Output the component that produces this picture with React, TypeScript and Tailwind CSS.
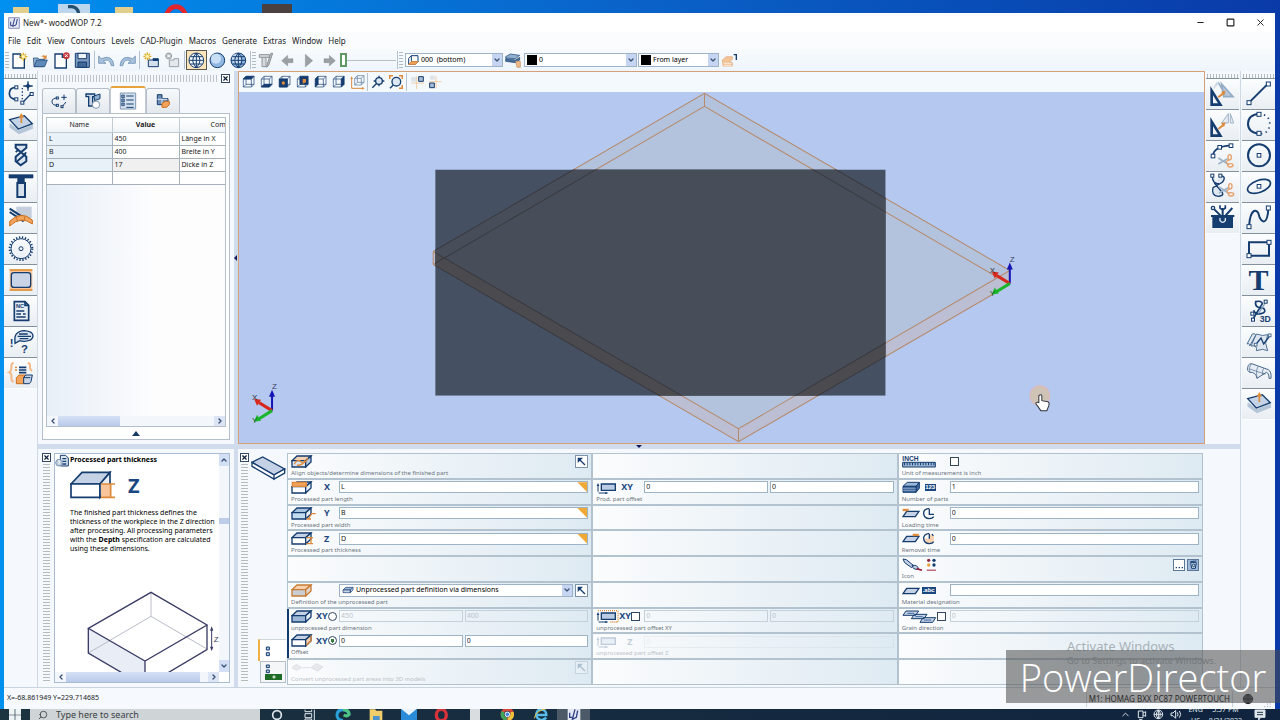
import type { ReactNode } from "react";
import { ChevronDown, ChevronLeft, ChevronRight, ChevronUp, Minus, Search, Square, X } from "lucide-react";
import clsx from "clsx";

const NAVY = "#153d6f";
const ORANGE = "#dd8a3a";

type IconProps = { w: number; h: number; children: ReactNode; sw?: number; color?: string };

// Every icon is drawn on a grid three times finer than its size on screen
function Icon({ w, h, children, sw = 4, color = NAVY }: IconProps) {
  return (
    <svg
      width={w}
      height={h}
      viewBox={`0 0 ${w * 3} ${h * 3}`}
      fill="none"
      stroke={color}
      strokeWidth={sw}
      className="shrink-0"
      aria-hidden="true"
    >
      {children}
    </svg>
  );
}

function Node({ x, y, s = 9 }: { x: number; y: number; s?: number }) {
  return <rect x={x - s / 2} y={y - s / 2} width={s} height={s} fill="#fff" strokeWidth={3} />;
}

function Scissors({ x, y }: { x: number; y: number }) {
  return (
    <g transform={`translate(${x} ${y})`}>
      <path d="M2 4 30 22M2 22 30 6" stroke="#9db3c9" strokeWidth={5} />
      <ellipse cx="36" cy="2" rx="5" ry="8" stroke="#e9a06a" />
      <ellipse cx="38" cy="26" rx="8" ry="5" stroke="#e9a06a" />
      <path d="m24 16 10-6M26 18l8 6" stroke="#e9a06a" />
    </g>
  );
}

function Plate() {
  return (
    <Icon w={28} h={28}>
      <path d="M8 46 36 66 78 50M8 40 36 60 78 44" stroke="#b4c6d8" strokeWidth={6} />
      <path d="M8 26 52 14 76 38 34 54Z" fill="#c4d4e6" />
      <path d="M43 36V14" stroke={ORANGE} strokeWidth={5} />
      <path d="m35 20 8-14 8 14Z" fill={ORANGE} stroke="none" />
    </Icon>
  );
}

const leftTools: { name: string; icon: ReactNode }[] = [
  {
    name: "Contour",
    icon: (
      <Icon w={28} h={28}>
        <path d="M28 22Q7 22 7 40T28 58" strokeWidth={5} />
        <path d="M46 24v34" strokeDasharray="4 6" />
        <path d="M63 4v28M49 18h28M46 68l28-28" />
        <path d="m63 10 8 8-8 8-8-8Z" fill={NAVY} stroke="none" />
        <Node x={28} y={22} />
        <Node x={28} y={58} />
        <Node x={46} y={68} />
        <Node x={74} y={42} />
      </Icon>
    ),
  },
  { name: "Workpiece", icon: <Plate /> },
  {
    name: "Drilling",
    icon: (
      <Icon w={28} h={28}>
        <path d="M26 8h32v9L26 44v14l15 12 17-12V44L26 17Z" fill="#dbe5ef" strokeWidth={6} />
        <path d="M26 30l8-6M50 38l8-7M28 60l28-24" strokeWidth={5} />
      </Icon>
    ),
  },
  {
    name: "Routing",
    icon: (
      <Icon w={28} h={28}>
        <path d="M6 5h72v10H52v12H32V15H6Z" fill={NAVY} strokeWidth={2} />
        <path d="M31 30h23v42H31Z" fill="#d5e0ec" strokeWidth={6} />
      </Icon>
    ),
  },
  {
    name: "Edge",
    icon: (
      <Icon w={28} h={28}>
        <path d="M28 8h46v34H28Z" fill="#c5cedd" stroke="none" />
        <path d="m8 14 50 32M8 24l42 28" strokeWidth={6} />
        <path d="M8 52q34-34 68-4v12Q42 34 8 66Z" fill="#f2a45c" stroke="#c96f20" strokeWidth={3} />
        <path d="m28 38 4 14M54 38l-3 12" stroke="#c96f20" strokeWidth={3} />
      </Icon>
    ),
  },
  {
    name: "Sawing",
    icon: (
      <Icon w={28} h={28}>
        <circle cx="42" cy="41" r="34" strokeWidth={6} strokeDasharray="4 5" />
        <circle cx="42" cy="41" r="30" strokeWidth={3} />
        <circle cx="42" cy="41" r="6" strokeWidth={3} />
      </Icon>
    ),
  },
  {
    name: "Pocket",
    icon: (
      <Icon w={28} h={28}>
        <path d="M8 10h68v64H8Z" fill="#f9c69a" stroke="none" />
        <path d="M8 12h68M8 72h68" stroke="#e08a2e" strokeWidth={5} />
        <rect x="13" y="20" width="58" height="44" rx="8" fill="#c9d5e6" />
      </Icon>
    ),
  },
  {
    name: "NC code",
    icon: (
      <Icon w={28} h={28} sw={5}>
        <path d="M22 14h32l11 11v45H22Z" fill="#e8eef5" />
        <path d="M54 14v11h11M28 42h24M28 51h14M28 60h28M48 51h8" />
        <text x="27" y="34" fontSize="17" fontWeight="700" fill={NAVY} stroke="none" fontFamily="Liberation Sans, sans-serif">NC</text>
      </Icon>
    ),
  },
  {
    name: "Comment",
    icon: (
      <Icon w={28} h={28}>
        <path d="M24 40q-4-30 28-32 26 2 26 16T52 40q-8 0-14-2l-14 8Z" fill="#dbe7f2" strokeWidth={4} />
        <path d="M36 18h26M32 25h40M38 32h26" />
        <text x="8" y="58" fontSize="34" fontWeight="700" fill={NAVY} stroke="none" fontFamily="Liberation Sans, sans-serif">!</text>
        <text x="42" y="75" fontSize="34" fontWeight="700" fill={NAVY} stroke="none" fontFamily="Liberation Sans, sans-serif">?</text>
      </Icon>
    ),
  },
  {
    name: "Component",
    icon: (
      <Icon w={28} h={28}>
        <path d="M20 12q-8 0-7 12t-6 16q7 2 6 14t7 14M62 12q8 0 7 10t6 14" stroke="#f3b98b" strokeWidth={6} />
        <path d="M36 25h22M36 33h22M36 41h22" strokeWidth={5} />
        <path d="M24 25h6M24 33h6" stroke={ORANGE} />
        <path d="m28 56 8-8h20l-5 8v18H28Z" fill="#f2a45c" stroke="#c96f20" strokeWidth={3} />
        <path d="m50 56 6-8h20l-4 20-5 6H50ZM50 56h20" fill="#c9d5e6" strokeWidth={3} />
      </Icon>
    ),
  },
];

const editTools: { name: string; icon: ReactNode }[] = [
  {
    name: "Move",
    icon: (
      <Icon w={28} h={28}>
        <path d="M38 12 72 50H44ZM28 8l20 34" fill="#b9c8d8" stroke="#93abc4" strokeWidth={5} />
        <path d="M20 18 30 4M14 26 24 8" stroke="#cbd7e3" />
        <path d="M8 32v42h26Z" strokeWidth={8} />
        <path d="m28 52 16-13" stroke={ORANGE} strokeWidth={6} />
        <path d="m50 32-14 3 9 11Z" fill={ORANGE} stroke="none" />
      </Icon>
    ),
  },
  {
    name: "Mirror",
    icon: (
      <Icon w={28} h={28}>
        <path d="M58 8v28H38ZM64 8v28h10Z" fill="#e4ebf3" stroke="#9fb4c9" strokeWidth={3} />
        <path d="M8 32v42h26Z" strokeWidth={8} />
        <path d="m28 54 16-13" stroke={ORANGE} strokeWidth={6} />
        <path d="m50 34-14 3 9 11Z" fill={ORANGE} stroke="none" />
      </Icon>
    ),
  },
  {
    name: "Trim",
    icon: (
      <Icon w={28} h={28}>
        <path d="M12 42Q12 14 66 10" strokeWidth={5} />
        <Node x={12} y={42} s={11} />
        <Node x={32} y={16} s={11} />
        <Node x={66} y={11} s={11} />
        <Scissors x={26} y={44} />
      </Icon>
    ),
  },
  {
    name: "Split",
    icon: (
      <Icon w={28} h={28}>
        <path d="M10 8q0 26 20 24M34 8q20 2 6 20L12 44q-6 24 16 26 22-2 8-16L16 30" strokeWidth={4} fill="#d4e0ec" fillOpacity={0.6} />
        <Node x={10} y={8} />
        <Node x={34} y={8} />
        <Scissors x={28} y={38} />
      </Icon>
    ),
  },
  {
    name: "Toolbox",
    icon: (
      <Icon w={28} h={28}>
        <path d="M10 38h62v34H10Z" fill={NAVY} stroke="none" />
        <path d="M6 36h70M16 16l18 18M41 12v22M70 12 50 34" strokeWidth={6} />
        <path d="M33 4v8l8 6 8-6V4" strokeWidth={5} />
        <circle cx="12" cy="12" r="5" />
        <path d="M33 42v8q8 10 16 0v-8" stroke="#dfe8f2" strokeWidth={4} />
      </Icon>
    ),
  },
];

const drawTools: { name: string; icon: ReactNode }[] = [
  {
    name: "Line",
    icon: (
      <Icon w={28} h={28} sw={6}>
        <path d="M12 68 70 10" />
        <Node x={12} y={68} s={12} />
        <Node x={70} y={12} s={12} />
      </Icon>
    ),
  },
  {
    name: "Arc",
    icon: (
      <Icon w={28} h={28} sw={6}>
        <path d="M42 8Q9 12 9 38T42 68" />
        <path d="M42 8q34 4 32 32T46 68" strokeDasharray="4 11" strokeWidth={5} />
        <Node x={42} y={10} s={12} />
        <Node x={42} y={67} s={12} />
      </Icon>
    ),
  },
  {
    name: "Circle",
    icon: (
      <Icon w={28} h={28} sw={6}>
        <circle cx="42" cy="40" r="33" />
        <Node x={42} y={40} s={11} />
      </Icon>
    ),
  },
  {
    name: "Ellipse",
    icon: (
      <Icon w={28} h={28} sw={5}>
        <ellipse cx="42" cy="40" rx="36" ry="18" transform="rotate(-20 42 40)" />
        <Node x={42} y={40} s={11} />
      </Icon>
    ),
  },
  {
    name: "Spline",
    icon: (
      <Icon w={28} h={28} sw={6}>
        <path d="M12 68C16 8 38 14 42 34S68 70 70 12" />
        <Node x={12} y={68} s={12} />
        <Node x={70} y={12} s={12} />
      </Icon>
    ),
  },
  {
    name: "Rectangle",
    icon: (
      <Icon w={28} h={28} sw={6}>
        <path d="M12 22h60v40H12Z" />
        <Node x={12} y={62} s={12} />
        <Node x={72} y={22} s={12} />
      </Icon>
    ),
  },
  {
    name: "Text",
    icon: <span className="font-['Liberation_Serif',serif] text-[30px] leading-[30px] font-bold text-[#153d6f]">T</span>,
  },
  {
    name: "3D curve",
    icon: (
      <Icon w={28} h={28}>
        <path d="M24 66 52 20Q50 10 32 14q-4 20 24 20 10 12-8 16T26 40" strokeWidth={5} />
        <path d="M62 16 40 50" stroke="#8ea7c2" />
        <Node x={22} y={50} />
        <Node x={24} y={68} />
        <Node x={62} y={14} />
        <text x="44" y="76" fontSize="26" fontWeight="700" fill={NAVY} stroke="none" fontFamily="Liberation Sans, sans-serif">3D</text>
      </Icon>
    ),
  },
  {
    name: "Surface curve",
    icon: (
      <Icon w={28} h={28} sw={3} color="#4f7095">
        <path d="M22 18 6 48q8-4 8 6L32 22q-2-8-10-4ZM34 18l-16 36q20-4 16 14 20-8 34 0l-6-22 6-26q-14 6-34-2Z" fill="#dde6ef" />
        <path d="m32 50 16-20 8 18 18-24" stroke={NAVY} strokeWidth={4} />
        <Node x={32} y={50} s={8} />
        <Node x={74} y={22} s={8} />
      </Icon>
    ),
  },
  {
    name: "Surface",
    icon: (
      <Icon w={28} h={28} sw={3} color="#4a678a">
        <path d="M8 34q-2-20 12-20l50 18q10 6 8 26h-6q0-16-8-18L36 58Q32 38 14 40Z" fill="#e6edf4" />
        <path d="M20 14q-8 6-6 26M40 22q-8 8-4 36M56 28q-6 6-2 20M14 30l48 16" strokeWidth={2} />
      </Icon>
    ),
  },
  { name: "Working plane", icon: <Plate /> },
];

function ToolButton({ name, children }: { name: string; children: ReactNode }) {
  return (
    <button
      aria-label={name}
      className="h-[31px] w-full shrink-0 flex items-center justify-center border-b border-[#84909c] last:border-transparent bg-gradient-to-b from-[#fbfdfe] to-[#e9eef3]"
    >
      {children}
    </button>
  );
}

function ToolStrip({ tools }: { tools: { name: string; icon: ReactNode }[] }) {
  return (
    <div className="w-[33px] shrink-0 flex flex-col pt-[3px]">
      <div className="h-1 mx-px bg-[repeating-linear-gradient(90deg,#b4bbc1_0_1px,transparent_1px_3px)]" />
      <div className="border-t border-[#84909c] flex flex-col">
        {tools.map((tool) => (
          <ToolButton name={tool.name} key={tool.name}>
            {tool.icon}
          </ToolButton>
        ))}
      </div>
    </div>
  );
}

function CloseBox() {
  return (
    <button aria-label="Close panel" className="size-[9px] shrink-0 border border-[#33475f] bg-white flex items-center justify-center">
      <X size={7} strokeWidth={4} color="#0e1f38" />
    </button>
  );
}

function Sep() {
  return <div className="h-[18px] w-px shrink-0 mx-px bg-[#b6c2cf]" />;
}

function Grip() {
  return <div className="h-[16px] w-1 shrink-0 bg-[repeating-linear-gradient(180deg,#b4bbc1_0_1px,transparent_1px_3px)]" />;
}

function BarButton({ name, children, active }: { name: string; children: ReactNode; active?: boolean }) {
  return (
    <button
      aria-label={name}
      className={clsx(
        "w-[21px] h-[20px] shrink-0 flex items-center justify-center",
        active && "border border-[#5c584e] bg-[#fbe3ba]"
      )}
    >
      {children}
    </button>
  );
}

function Doc({ children }: { children?: ReactNode }) {
  return (
    <Icon w={17} h={17}>
      <path d="M6 6h22v10h12v32H6Z" fill="#fff" />
      {children}
    </Icon>
  );
}

function Star({ x, y }: { x: number; y: number }) {
  return (
    <g transform={`translate(${x} ${y})`} stroke="#e0b12c" strokeWidth={4}>
      <path d="M0-12V12M-12 0H12M-8-8 8 8M8-8-8 8" />
      <circle r="5" fill="#fff6c0" stroke="none" />
    </g>
  );
}

function Globe({ lines, white }: { lines?: boolean; white?: boolean }) {
  return (
    <Icon w={17} h={17} sw={3}>
      <circle cx="25" cy="25" r="22" fill={white ? "#f4f8fc" : "#8fb6e0"} />
      {!white && <circle cx="21" cy="20" r="15" fill="#c8def4" stroke="none" />}
      {lines && <path d="M25 3v44M3 25h44M25 3q-22 22 0 44M25 3q22 22 0 44M7 14h36M7 36h36" />}
    </Icon>
  );
}

function MainToolbar() {
  return (
    <div className="h-[22px] shrink-0 flex items-center pl-px bg-gradient-to-b from-[#f8fbfe] to-[#eef5fb]">
      <Grip />
      <BarButton name="New">
        <Doc>
          <Star x={37} y={14} />
        </Doc>
      </BarButton>
      <BarButton name="Open">
        <Icon w={17} h={17} sw={2}>
          <path d="M4 18h14l4 4h16v8L34 44H6Z" fill="#8fb0d0" />
          <path d="m6 44 8-20h32l-8 20Z" fill="#5f8ab8" />
          <path d="M26 14q8-8 14-2l4-4v12H32l4-4q-4-3-10-2Z" fill={ORANGE} stroke="none" />
        </Icon>
      </BarButton>
      <BarButton name="Close">
        <Doc>
          <circle cx="40" cy="11" r="10" fill="#c43b3f" stroke="none" />
          <path d="m36 7 8 8m0-8-8 8" stroke="#fff" strokeWidth={3} />
        </Doc>
      </BarButton>
      <BarButton name="Save">
        <Icon w={17} h={17} sw={3}>
          <path d="M4 4h42v42H4Z" fill="#7c9bbf" />
          <path d="M12 4h26v16H12Z" fill="#eef3f8" />
          <path d="M12 30h26v16H12Z" fill="#3f6898" />
        </Icon>
      </BarButton>
      <Sep />
      <BarButton name="Undo">
        <Icon w={17} h={17} sw={2} color="#5a7fa8">
          <path d="M2 12v22h22l-8-7q18-10 24 14h8Q44 6 10 20Z" fill="#a9c2dc" />
        </Icon>
      </BarButton>
      <BarButton name="Redo">
        <Icon w={17} h={17} sw={2} color="#5a7fa8">
          <path d="M49 12v22H27l8-7q-18-10-24 14H3Q7 6 41 20Z" fill="#a9c2dc" />
        </Icon>
      </BarButton>
      <Sep />
      <BarButton name="New layer">
        <Icon w={17} h={17} sw={3}>
          <path d="M16 24h14v-4h16v24H16Z" fill="#d4e0ec" />
          <path d="M30 24h16" strokeWidth={6} />
          <Star x={13} y={13} />
        </Icon>
      </BarButton>
      <BarButton name="Delete layer">
        <Icon w={17} h={17} sw={3} color="#97a0a9">
          <path d="M16 24h14v-4h14v24H16Z" fill="#e4e8ec" />
          <circle cx="14" cy="12" r="9" fill="#b9bfc5" />
          <path d="m10 8 8 8m0-8-8 8" stroke="#fff" />
        </Icon>
      </BarButton>
      <Sep />
      <BarButton name="Wireframe" active>
        <Globe lines white />
      </BarButton>
      <BarButton name="Solid">
        <Globe />
      </BarButton>
      <BarButton name="Solid with edges">
        <Globe lines />
      </BarButton>
      <Sep />
      <Grip />
      <BarButton name="Simulate">
        <Icon w={17} h={17} sw={3} color="#8e9499">
          <path d="M4 8h30v8H4ZM12 16v28h12V16" fill="#d7dadd" />
          <path d="m44 4-12 36-6 6 2-10L38 4Z" fill="#b5babe" />
        </Icon>
      </BarButton>
      <BarButton name="Step back">
        <Icon w={13} h={13} sw={1} color="#777d82">
          <path d="M2 20 20 4v10h16v12H20v10Z" fill="#9ba0a4" />
        </Icon>
      </BarButton>
      <BarButton name="Play">
        <Icon w={13} h={15} sw={1} color="#777d82">
          <path d="m10 4 22 19-22 19Z" fill="#9ba0a4" />
        </Icon>
      </BarButton>
      <BarButton name="Step forward">
        <Icon w={13} h={13} sw={1} color="#777d82">
          <path d="M37 20 19 4v10H3v12h16v10Z" fill="#9ba0a4" />
        </Icon>
      </BarButton>
      <input
        type="range"
        aria-label="Speed"
        defaultValue={0}
        className="w-[56px] h-[16px] shrink-0 appearance-none bg-[linear-gradient(#b9bfc5,#b9bfc5)] bg-[length:100%_1px] bg-center bg-no-repeat [&::-webkit-slider-thumb]:appearance-none [&::-webkit-slider-thumb]:w-[7px] [&::-webkit-slider-thumb]:h-[14px] [&::-webkit-slider-thumb]:border-2 [&::-webkit-slider-thumb]:border-[#5f9a63] [&::-webkit-slider-thumb]:bg-white"
      />
      <Sep />
      <Grip />
      <Combo label="Plane" options={["000\u00a0 (bottom)"]} className="w-[98px] h-[14px] ml-[2px]">
        <Icon w={11} h={10} sw={3}>
          <path d="M10 2h20v18l-8 8H2V10ZM10 2v18h20" />
          <path d="m2 28 8-8h20l-8 8Z" fill="#f2a45c" stroke={ORANGE} />
        </Icon>
      </Combo>
      <BarButton name="Layers">
        <Icon w={17} h={17} sw={2}>
          <path d="m2 14 14-8 28 4-12 10-30-2Z" fill="#8fb0d0" />
          <path d="m2 20 30 4 12-8v8l-12 8-30-4Z" fill="#4a6f9b" />
          <path d="M32 28h14v18H36Z" fill="#f0b98a" stroke="#c98c5a" />
        </Icon>
      </BarButton>
      <Combo label="Layer" options={["0"]} className="w-[113px] h-[14px]">
        <span className="size-[10px] bg-black" />
      </Combo>
      <Combo label="Colour" options={["From layer"]} className="w-[81px] h-[14px] ml-px">
        <span className="size-[10px] bg-black" />
      </Combo>
      <BarButton name="Apply">
        <Icon w={17} h={17} sw={2}>
          <path d="m4 24 12-10h18v8l-8 8 8 2v10H6Z" fill="#f3c49a" stroke="#dca575" />
          <path d="M38 8h8v16" strokeWidth={4} color="#5d6c7c" />
          <path d="M8 34h24M8 40h24" stroke="#fff" />
        </Icon>
      </BarButton>
    </div>
  );
}

type ComboProps = { label: string; id?: string; options: string[]; className: string; children: ReactNode };

function Combo({ label, id, options, className, children }: ComboProps) {
  return (
    <div className={clsx("shrink-0 flex items-center gap-[2px] pl-[2px] border border-[#9fb3c8] bg-white", className)}>
      {children}
      <select
        id={id}
        aria-label={label}
        className="flex-1 min-w-0 h-full appearance-none bg-transparent font-['Noto_Sans',sans-serif] text-[7px] leading-[10px] text-black"
      >
        {options.map((option) => (
          <option key={option}>{option}</option>
        ))}
      </select>
      <span className="w-[10px] h-full flex items-center justify-center bg-[#c6d6f2] pointer-events-none">
        <ChevronDown size={8} strokeWidth={4} color="#3e5578" />
      </span>
    </div>
  );
}

// Cube faces in the order of the view buttons: top, bottom, front, back, left, right
const cubeFaces = [
  "M4 12 12 4h24l-8 8Z",
  "m4 36 8-8h24l-8 8Z",
  "M4 12h24v24H4Z",
  "M12 4h24v24H12Z",
  "m4 12 8-8v24l-8 8Z",
  "m28 12 8-8v24l-8 8Z",
];
const cubeNames = ["Top", "Bottom", "Front", "Back", "Left", "Right"];

function ViewButton({ name, children }: { name: string; children: ReactNode }) {
  return (
    <button aria-label={name} className="w-[18px] h-full shrink-0 flex items-center justify-center">
      {children}
    </button>
  );
}

function ViewToolbar() {
  return (
    <div className="h-[20px] shrink-0 flex items-center pl-px bg-[#f4f9fd]">
      {cubeFaces.map((face, index) => (
        <ViewButton name={cubeNames[index]} key={face}>
          <Icon w={14} h={14} sw={2}>
            <path d={face} fill={NAVY} />
            <path d="M4 12h24v24H4ZM12 4h24v24H12ZM4 12l8-8M28 12l8-8M28 36l8-8M4 36l8-8" />
            {index === 2 && <circle cx="16" cy="24" r="5" fill={ORANGE} stroke="none" />}
            {index === 3 && <path d="M20 12h10v10l-10 4Z" fill={ORANGE} stroke="none" />}
          </Icon>
        </ViewButton>
      ))}
      <ViewButton name="Isometric">
        <Icon w={15} h={15} sw={2} color="#57779c">
          <path d="M14 10h20v20H14ZM22 2h20v20H22ZM14 10l8-8M34 10l8-8M34 30l8-8M14 30l8-8" />
          <path d="M5 10v30h34" stroke={ORANGE} strokeWidth={3} />
          <path d="m5 4-4 8h8ZM44 40l-8-4v8Z" fill={ORANGE} stroke="none" />
        </Icon>
      </ViewButton>
      <Sep />
      <ViewButton name="Zoom">
        <Icon w={14} h={14}>
          <circle cx="24" cy="18" r="10" fill="#dce8f4" />
          <path d="M24 2v6M24 28v6M8 18h6M34 18h6M16 26 4 38" />
        </Icon>
      </ViewButton>
      <ViewButton name="Zoom all">
        <Icon w={14} h={14}>
          <path d="M2 12V2h10M30 2h10v10M40 30v10H30" stroke={ORANGE} strokeWidth={5} />
          <circle cx="22" cy="20" r="13" fill="#dce8f4" />
          <path d="M13 30 3 40" />
        </Icon>
      </ViewButton>
      <Sep />
      <ViewButton name="Snap right">
        <Icon w={15} h={14} sw={3}>
          <path d="M4 6h14v14H4Z" fill="#dde3e9" stroke="none" />
          <path d="M20 4v38M4 24h38" stroke="#efcfa8" />
          <path d="M26 5h14v14H26Z" fill="#a9bed6" />
        </Icon>
      </ViewButton>
      <ViewButton name="Snap left">
        <Icon w={14} h={14} sw={3}>
          <path d="M6 2h14v12H6Z" fill="#dde3e9" stroke="none" />
          <path d="M24 4v36M4 20h36" stroke="#efcfa8" />
          <path d="M5 24h14v14H5Z" fill="#a9bed6" />
        </Icon>
      </ViewButton>
    </div>
  );
}

function Axes({ x, y }: { x: number; y: number }) {
  return (
    <g transform={`translate(${x} ${y})`} fontFamily="Liberation Sans, sans-serif" fontSize="8">
      <path d="M0 0v-16" stroke="#1414b4" strokeWidth={2} />
      <path d="m-3-14 3-7 3 7Z" fill="#1414b4" />
      <path d="m0 0-13-8" stroke="#d6281c" strokeWidth={3} />
      <path d="m-18-12 7 1-4 6Z" fill="#d6281c" />
      <path d="m0 0-13 8" stroke="#19b52a" strokeWidth={3} />
      <path d="m-18 11 7-1-4-6Z" fill="#19b52a" />
      <text x="0" y="-22" fill="#3c3f66">Z</text>
      <text x="-20" y="-11" fill="#333">X</text>
      <text x="-20" y="12" fill="#1d5a26">Y</text>
    </g>
  );
}

// Edges of the workpiece in the isometric view
const wires =
  "M434 252 705 94l305 177M434 265l271-158 305 178M705 94v13M434 252v13M434 252l305 177 271-158M434 265l305 177 271-157M739 429v13";

function Scene() {
  return (
    <svg viewBox="240 92 964 352" preserveAspectRatio="xMidYMid slice" className="block w-full h-full" role="img" aria-label="3D view">
      <clipPath id="plate">
        <path d="M436 170h450v226H436Z" />
      </clipPath>
      <rect x="0" y="0" width="1400" height="720" fill="#b5c8ef" />
      <path d="m705 94 305 177-271 158L434 252Z" fill="#b4c3dd" />
      <path d="m434 252 305 177 271-158v14L739 442 434 265Z" fill="#bcbfd3" />
      <path d={wires} fill="none" stroke="#b58a6c" strokeWidth={1} />
      <g clipPath="url(#plate)">
        <path d="M436 170h450v226H436Z" fill="#455062" />
        <path d="m705 94 305 177-271 158L434 252Z" fill="#484e59" />
        <path d="m434 252 305 177 271-158v14L739 442 434 265Z" fill="#4a4a4f" />
        <path d={wires} fill="none" stroke="#3a3a40" strokeWidth={1} />
      </g>
      <Axes x={1010} y={284} />
      <Axes x={273} y={411} />
      <circle cx="1040" cy="396" r="10" fill="#cfc3b6" stroke="#dbb7c2" />
      <path
        d="M1039 396q2-2 3 0v5l6 1q2 1 1 4l-2 5h-6l-5-7q0-2 3-1Z"
        fill="#fff"
        stroke="#30343c"
        strokeWidth={1}
      />
    </svg>
  );
}

const variables = [
  { name: "L", value: "450", comment: "Länge in X" },
  { name: "B", value: "400", comment: "Breite in Y" },
  { name: "D", value: "17", comment: "Dicke in Z" },
  { name: "", value: "", comment: "" },
];

function HScroll({ thumb }: { thumb: string }) {
  return (
    <div className="h-[10px] shrink-0 flex items-center bg-[#f3f7fb]">
      <button aria-label="Scroll left" className="w-[11px] h-full flex items-center justify-center">
        <ChevronLeft size={8} strokeWidth={4} color="#3a4f77" />
      </button>
      <div className="flex-1 h-full">
        <div className={clsx("h-full bg-gradient-to-b from-[#d5e0f5] to-[#b9caea]", thumb)} />
      </div>
      <button aria-label="Scroll right" className="w-[11px] h-full flex items-center justify-center bg-[#dce5f3]">
        <ChevronRight size={8} strokeWidth={4} color="#3a4f77" />
      </button>
    </div>
  );
}

function PanelTab({ name, active, children }: { name: string; active?: boolean; children: ReactNode }) {
  return (
    <button
      role="tab"
      aria-selected={active ? true : false}
      aria-label={name}
      className={clsx(
        "flex items-center justify-center border-x border-t rounded-t-[3px]",
        active
          ? "w-[36px] h-[27px] bg-white border-[#c3ccd5] border-t-2 border-t-[#e8a33c]"
          : "w-[34px] h-[25px] bg-gradient-to-b from-[#f7f9fb] to-[#e4e9ee] border-[#b6bfc8]"
      )}
    >
      {children}
    </button>
  );
}

function VariablesPanel() {
  return (
    <div className="w-[196px] shrink-0 flex flex-col px-[4px] pb-1">
      <div className="h-[15px] flex items-center gap-[2px]">
        <div className="flex-1 h-[7px] bg-[repeating-linear-gradient(90deg,#bcc3c9_0_1px,transparent_1px_3px)]" />
        <CloseBox />
      </div>
      <div role="tablist" className="h-[27px] flex items-end">
        <PanelTab name="Contours">
          <Icon w={18} h={18} sw={3}>
            <path d="M22 18Q6 18 6 29t16 11M36 44l12-14" />
            <path d="M42 8v16M34 16h16" />
            <Node x={22} y={18} s={6} />
            <Node x={22} y={40} s={6} />
            <Node x={36} y={44} s={6} />
          </Icon>
        </PanelTab>
        <PanelTab name="Processing">
          <Icon w={18} h={18} sw={3}>
            <path d="M6 6h26v8H26v28H14V14H6Z" fill="#c9d5e6" strokeWidth={4} />
            <path d="M30 12 48 6v14L32 26Z" fill="#8fb0d0" />
            <circle cx="36" cy="38" r="11" fill="#fff" stroke="#7b93ad" />
          </Icon>
        </PanelTab>
        <PanelTab name="Variables" active>
          <Icon w={18} h={18} sw={3}>
            <path d="M4 3h46v48H4Z" fill="#d5e2ee" stroke="#7d97b4" />
            <path d="M8 9h8v8H8ZM8 21h8v8H8ZM8 33h8v8H8Z" fill="#7d97b4" strokeWidth={2} />
            <path d="M22 12h22M22 24h22M22 36h22M22 46h22" />
          </Icon>
        </PanelTab>
        <PanelTab name="Components">
          <Icon w={14} h={18} sw={3}>
            <path d="M4 8h14v12h18v18H4Z" fill="#6d8db2" />
            <path d="M4 22h30M18 20v16" stroke="#dbe6f1" />
            <path d="m18 34 10-6h12v10l-8 8H18Z" fill="#f2a45c" stroke="#c96f20" />
          </Icon>
        </PanelTab>
      </div>
      <div className="flex-1 min-h-0 flex flex-col border border-[#b3bfca] bg-white p-[3px] pb-0">
        <div className="flex-1 min-h-0 flex flex-col border border-[#b3bfca] bg-gradient-to-r from-[#e7eff7] to-[#fdfdfe] to-60%">
          <div className="flex-1 overflow-hidden">
            <table className="w-[228px] table-fixed border-collapse font-['Noto_Sans',sans-serif] text-[7px] leading-[9px] text-[#222]">
              <thead className="bg-gradient-to-b from-white to-[#f1f4f7]">
                <tr className="h-[14px]">
                  <th className="w-[65px] font-normal border border-t-0 border-l-0 border-[#c2ccd5]">Name</th>
                  <th className="w-[67px] font-bold border border-t-0 border-[#c2ccd5]">Value</th>
                  <th className="font-normal border border-t-0 border-[#c2ccd5]">Comment</th>
                </tr>
              </thead>
              <tbody>
                {variables.map((row, index) => (
                  <tr className="h-[13px]" key={index}>
                    <td className={clsx("border border-l-0 border-[#a7b1bb] px-[2px]", row.name ? "bg-[#e8f0f8]" : "bg-white")}>
                      {row.name}
                    </td>
                    <td className={clsx("border border-[#a7b1bb] px-[2px]", row.name === "D" ? "bg-[#f0f0f0]" : "bg-white")}>
                      {row.value}
                    </td>
                    <td className="border border-[#a7b1bb] px-[2px] bg-white">{row.comment}</td>
                  </tr>
                ))}
              </tbody>
            </table>
          </div>
          <HScroll thumb="w-[62px]" />
        </div>
        <div className="h-[12px] shrink-0 flex items-center justify-center">
          <span className="border-x-4 border-x-transparent border-b-[5px] border-b-[#173a66]" />
        </div>
      </div>
    </div>
  );
}

function HelpPanel() {
  return (
    <div className="w-[196px] shrink-0 flex px-[4px] gap-[3px] pt-1 pb-1">
      <div className="flex flex-col items-center gap-[2px]">
        <CloseBox />
        <div className="flex-1 w-[7px] bg-[repeating-linear-gradient(180deg,#b4bbb9_0_1px,transparent_1px_3px)]" />
      </div>
      <div className="flex-1 min-w-0 flex flex-col border border-[#a9bdd2] bg-white">
        <div className="flex-1 min-h-0 flex">
          <div className="flex-1 min-w-0 overflow-hidden font-['Noto_Sans',sans-serif] text-black">
            <div className="flex items-center h-[13px]">
              <Icon w={15} h={14} sw={3}>
                <path d="M16 4h16l8 8v24H16Z" fill="#dbe6f1" />
                <path d="M22 14h12M22 22h12M22 30h12" strokeWidth={4} />
                <circle cx="12" cy="26" r="10" fill="#b9c9da" stroke="#7d97b4" />
                <path d="M9 22q4-5 6 0l-3 5v4" stroke="#fff" />
              </Icon>
              <h2 className="text-[7px] font-bold whitespace-nowrap">Processed part thickness</h2>
            </div>
            <div className="pl-[15px]">
              <div className="flex items-center gap-[12px] pt-[4px]">
                <Icon w={46} h={30} sw={5}>
                  <path d="M3 39 36 4h84L90 39Z" fill="#c5d2e6" />
                  <path d="M3 39h87v40H3Z" fill="#fff" />
                  <path d="M120 4v35L90 79V39Z" fill="#e8eef6" />
                  <path d="M93 39h28v40H93Z" fill="#f7c49c" stroke="none" />
                  <path d="M93 39h42M93 79h42M122 39v40" stroke={ORANGE} />
                </Icon>
                <span className="text-[20px] leading-none font-bold text-[#1b4781]">Z</span>
              </div>
              <p className="pt-[7px] text-[7px] leading-[9px] whitespace-nowrap">
                The finished part thickness defines the
                <br />
                thickness of the workpiece in the Z direction
                <br />
                after processing. All processing parameters
                <br />
                with the <b>Depth</b> specification are calculated
                <br />
                using these dimensions.
              </p>
              <div className="pt-[38px] pl-[17px]">
                <Icon w={136} h={90} sw={4} color="#3b3d66">
                  <path d="M4 112 174 210v80L4 186Z" fill="#e9edf5" stroke="none" />
                  <path d="M192 4v72L4 186M192 76l168 98" stroke="#b9bdc9" strokeWidth={3} />
                  <path d="M4 112 192 4l168 98-186 108ZM4 112v74l170 100M174 210v76M360 102v74L174 286" />
                  <path d="M374 110v66" strokeWidth={3} />
                  <path d="m374 106-5 13h10ZM374 180l-5-13h10Z" fill="#3b3d66" stroke="none" />
                  <text x="380" y="154" fontSize="24" fill="#3b3d66" stroke="none" fontFamily="Liberation Sans, sans-serif">Z</text>
                </Icon>
              </div>
            </div>
          </div>
          <div className="w-[10px] shrink-0 flex flex-col items-center bg-[#f3f7fb]">
            <button aria-label="Scroll up" className="h-[12px] w-full flex items-center justify-center bg-[#d3dff4]">
              <ChevronUp size={8} strokeWidth={4} color="#3a4f77" />
            </button>
            <span className="h-[6px] w-full mt-[52px] bg-[#bccce9]" />
            <button aria-label="Scroll down" className="mt-auto h-[12px] w-full flex items-center justify-center bg-[#d3dff4]">
              <ChevronDown size={8} strokeWidth={4} color="#3a4f77" />
            </button>
          </div>
        </div>
        <div className="pr-[10px]">
          <HScroll thumb="w-[134px]" />
        </div>
      </div>
    </div>
  );
}

type BoxProps = { top?: string; front?: string; side?: string; edge?: string; children?: ReactNode };

function PartBox({ top = "#c5d2e6", front = "#fff", side = "#e8eef6", edge = NAVY, children }: BoxProps) {
  return (
    <Icon w={25} h={13} sw={4} color={edge}>
      <path d="M3 17 18 3h42L44 17Z" fill={top} />
      <path d="M3 17h41v19H3Z" fill={front} />
      <path d="M60 3v18L44 36V17Z" fill={side} />
      {children}
    </Icon>
  );
}

function Sheet({ children }: { children?: ReactNode }) {
  return (
    <Icon w={18} h={11} sw={4}>
      <path d="M3 26 14 10h37L40 26Z" fill="#c5d2e6" />
      {children}
    </Icon>
  );
}

function OffsetIcon({ dashed }: { dashed?: boolean }) {
  return (
    <Icon w={23} h={13} sw={4}>
      <path d="M16 9h42v19H16Z" fill="#b9cce4" />
      <path d="M6 32V12M8 36h22" strokeWidth={3} />
      <path d="M6 6 2 15h8ZM37 36l-9-4v8Z" fill={NAVY} stroke="none" />
      {dashed && <path d="M6 2h60v34H40" stroke={ORANGE} strokeDasharray="3 3" />}
    </Icon>
  );
}

function Letter({ children }: { children: ReactNode }) {
  return <span className="font-['Noto_Sans',sans-serif] font-bold text-[9px] leading-[12px] text-[#1b4781]">{children}</span>;
}

type FieldProps = { label?: string; id?: string; icon?: ReactNode; children?: ReactNode; faded?: boolean; className?: string };

function Field({ label, id, icon, children, faded, className }: FieldProps) {
  return (
    <div className={clsx("min-w-0 min-h-0 overflow-hidden bg-gradient-to-r from-[#fbfcfd] to-[#deeaf2] px-[3px] pt-px", className)}>
      {label && (
        <>
          <div className={clsx("h-[13px] flex items-center", faded && "opacity-25")}>
            <div className="w-[48px] shrink-0 flex items-center gap-[2px]">{icon}</div>
            <div className="flex-1 min-w-0 flex items-center gap-[2px]">{children}</div>
          </div>
          <label
            htmlFor={id}
            className={clsx(
              "block font-['Noto_Sans',sans-serif] text-[6px] leading-[10px] whitespace-nowrap",
              faded ? "text-[#bcc3c9]" : "text-[#6c7680]"
            )}
          >
            {label}
          </label>
        </>
      )}
    </div>
  );
}

type TextBoxProps = { id?: string; name?: string; value: string; disabled?: boolean; linked?: boolean };

function TextBox({ id, name, value, disabled, linked }: TextBoxProps) {
  return (
    <div
      className={clsx(
        "flex-1 min-w-0 h-[12px] flex border",
        disabled ? "border-[#c5d1da] bg-transparent" : "border-[#9db3c6] bg-white"
      )}
    >
      <input
        id={id}
        aria-label={name}
        defaultValue={value}
        disabled={disabled}
        className={clsx(
          "flex-1 min-w-0 px-[1px] bg-transparent font-['Noto_Sans',sans-serif] text-[7px] leading-[10px]",
          disabled ? "text-[#bcc5cd]" : "text-[#222]"
        )}
      />
      {linked && <span className="size-[10px] bg-[#f0a935] [clip-path:polygon(0_0,100%_0,100%_100%)]" />}
    </div>
  );
}

function ArrowButton({ name }: { name: string }) {
  return (
    <button aria-label={name} className="size-[13px] shrink-0 border border-[#7e93a8] bg-white flex items-center justify-center">
      <Icon w={9} h={9} sw={4}>
        <path d="M6 6 24 24" />
        <path d="M2 2h16L2 18Z" fill={NAVY} stroke="none" />
      </Icon>
    </button>
  );
}

function Tick({ id, name }: { id?: string; name?: string }) {
  return <input type="checkbox" id={id} aria-label={name} className="size-[9px] shrink-0 appearance-none border border-[#33475f] bg-white" />;
}

function Radio({ name, checked }: { name: string; checked?: boolean }) {
  return (
    <input
      type="radio"
      name="unprocessed"
      aria-label={name}
      defaultChecked={checked}
      className="size-[9px] shrink-0 appearance-none rounded-full border border-[#33475f] bg-white checked:bg-[radial-gradient(#2f7d3c_0_2px,#fff_2px)]"
    />
  );
}

function PartForm() {
  return (
    <div className="flex-1 min-w-0 flex pt-1 pb-[2px] pr-[37px]">
      <div className="w-[13px] shrink-0 flex flex-col items-center gap-[2px] pb-[2px]">
        <CloseBox />
        <div className="flex-1 w-[7px] bg-[repeating-linear-gradient(180deg,#b4bbb9_0_1px,transparent_1px_3px)]" />
      </div>
      <div className="w-[35px] shrink-0 flex flex-col items-end justify-between pb-[2px]">
        <Icon w={35} h={30} sw={4}>
          <path d="M3 28 35 12l66 36-32 18Z" fill="#c5d2e6" />
          <path d="M3 28v12l66 38V66ZM69 66v12l32-18V48Z" fill="#fff" />
        </Icon>
        <div className="flex flex-col items-end">
          <button aria-label="Basic data" className="w-[28px] h-[22px] pl-[5px] pt-[2px] border-l-2 border-l-[#efb04a] border-t border-t-[#d0d8df] bg-white">
            <Icon w={6} h={12} sw={3}>
              <path d="M4 3h9v9H4ZM4 20h9v9H4Z" fill="#b9cce4" />
            </Icon>
          </button>
          <button aria-label="Add page" className="w-[26px] h-[22px] px-[4px] pt-[2px] border border-[#b6bfc8] bg-[#f4f6f8] flex flex-col">
            <Icon w={6} h={10} sw={3}>
              <path d="M4 3h9v8H4ZM4 18h9v8H4Z" fill="#b9cce4" />
            </Icon>
            <span className="h-[6px] w-[17px] bg-[#1d6b25] flex justify-center">
              <Icon w={6} h={6} sw={3} color="#fff">
                <path d="M9 4v10M4 9h10" />
              </Icon>
            </span>
          </button>
        </div>
      </div>
      <div className="flex-1 min-w-0 ml-px grid grid-cols-3 grid-rows-9 gap-[2px] border border-[#b2c3cf] bg-[#b2c3cf]">
        <Field
          label="Align objects/determine dimensions of the finished part"
          icon={
            <PartBox top="#f3d3b4" side="#b9cce4" front="#dbe6f1">
              <path d="M10 28q8-18 20-8t20-10M18 30q14 4 24-14" stroke={ORANGE} />
            </PartBox>
          }
        >
          <span className="flex-1" />
          <ArrowButton name="Align objects" />
        </Field>
        <Field />
        <Field
          label="Unit of measurement is inch"
          id="inch"
          icon={
            <Icon w={34} h={13} sw={3}>
              <text x="1" y="18" fontSize="20" fontWeight="700" fill={NAVY} stroke="none" fontFamily="Liberation Sans, sans-serif">INCH</text>
              <path d="M2 22h98v14H2Z" fill="#9db7d6" />
              <path d="M6 27h92" strokeWidth={7} strokeDasharray="3 5" />
            </Icon>
          }
        >
          <Tick id="inch" />
        </Field>

        <Field
          label="Processed part length"
          id="length"
          icon={
            <>
              <PartBox>
                <path d="M4 4h42v12H4Z" fill="#f2a45c" stroke={ORANGE} />
              </PartBox>
              <span className="w-1" />
              <Letter>X</Letter>
            </>
          }
        >
          <TextBox id="length" value="L" linked />
        </Field>
        <Field
          label="Prod. part offset"
          id="prod-offset"
          icon={
            <>
              <OffsetIcon />
              <Letter>XY</Letter>
            </>
          }
        >
          <TextBox id="prod-offset" value="0" />
          <TextBox name="Prod. part offset Y" value="0" />
        </Field>
        <Field
          label="Number of parts"
          id="parts"
          icon={
            <>
              <Icon w={21} h={13} sw={3}>
                <path d="M3 16 16 4h36L42 16Z" fill="#9db7d6" />
                <path d="M3 16h39v18H3ZM52 4v18L42 34V16Z" fill="#41699c" />
                <path d="M3 22h39M3 28h39" stroke="#9db7d6" strokeWidth={2} />
              </Icon>
              <span className="w-[11px] bg-[#1b4781] text-white font-['Liberation_Sans',sans-serif] font-bold text-[6px] leading-[7px] text-center">123</span>
            </>
          }
        >
          <TextBox id="parts" value="1" />
        </Field>

        <Field
          label="Processed part width"
          id="width"
          icon={
            <>
              <PartBox front="#c4dcf0" top="#a9c4e0">
                <path d="M52 36 62 20h12M46 36h14" stroke={ORANGE} />
              </PartBox>
              <span className="w-1" />
              <Letter>Y</Letter>
            </>
          }
        >
          <TextBox id="width" value="B" linked />
        </Field>
        <Field />
        <Field
          label="Loading time"
          id="loading"
          icon={
            <>
              <Sheet>
                <path d="M2 6h18" stroke={ORANGE} strokeWidth={7} />
              </Sheet>
              <Icon w={14} h={13} sw={4}>
                <path d="M22 4Q4 6 5 20t17 15q10 0 13-6M22 6v16h14" />
              </Icon>
            </>
          }
        >
          <TextBox id="loading" value="0" />
        </Field>

        <Field
          label="Processed part thickness"
          id="thickness"
          icon={
            <>
              <PartBox>
                <path d="M46 17h20M46 35h20M60 17v18" stroke={ORANGE} />
              </PartBox>
              <span className="w-1" />
              <Letter>Z</Letter>
            </>
          }
        >
          <TextBox id="thickness" value="D" linked />
        </Field>
        <Field />
        <Field
          label="Removal time"
          id="removal"
          icon={
            <>
              <Sheet>
                <path d="M32 6h18" stroke={ORANGE} strokeWidth={7} />
              </Sheet>
              <Icon w={14} h={13} sw={4}>
                <path d="M22 20V6q14 2 14 14t-14 15q-12-2-14-15Z" fill="#f7d0ad" stroke="none" />
                <path d="M22 4Q4 6 5 20t17 15q10 0 13-6M22 6v14M30 6l4 6" />
              </Icon>
            </>
          }
        >
          <TextBox id="removal" value="0" />
        </Field>

        <Field />
        <Field />
        <Field
          label="Icon"
          icon={
            <>
              <Icon w={22} h={13} sw={3}>
                <path d="m3 3 10 2 22 18-6 6L8 14ZM30 22q18-2 20 12-18 2-20-12Z" fill="#c5d2e6" />
                <path d="m44 32 16 5" stroke="#9c2740" strokeWidth={5} />
              </Icon>
              <Icon w={11} h={13} sw={1} color="none">
                <circle cx="8" cy="7" r="5" fill="#8d2a4a" />
                <circle cx="24" cy="7" r="5" fill={NAVY} />
                <circle cx="8" cy="21" r="5" fill="#e9a23c" />
                <circle cx="24" cy="21" r="5" fill={NAVY} />
                <path d="M2 35h28v3H2Z" fill="#9c2740" />
              </Icon>
            </>
          }
        >
          <span className="flex-1" />
          <button aria-label="Choose icon" className="size-[12px] border border-[#5d7896] bg-white flex items-end justify-center">
            <Icon w={9} h={4} sw={4}>
              <path d="M2 5h4M11 5h4M20 5h4" />
            </Icon>
          </button>
          <button aria-label="Delete icon" className="size-[12px] border border-[#5d7896] bg-[#9db7d6] flex items-center justify-center">
            <Icon w={9} h={9} sw={3}>
              <path d="M5 8h17l-3 17H8ZM4 5l18-2" fill="#dbe6f1" />
              <circle cx="14" cy="16" r="4" />
            </Icon>
          </button>
        </Field>

        <Field
          label="Definition of the unprocessed part"
          id="definition"
          icon={<PartBox edge="#c77c33" top="#f7d0ad" front="#c8cdd6" side="#e3d5c8" />}
        >
          <Combo
            id="definition"
            label="Definition of the unprocessed part"
            options={["Unprocessed part definition via dimensions"]}
            className="flex-1 min-w-0 h-[13px]"
          >
            <Icon w={12} h={8} sw={2}>
              <path d="m3 12 8-8h22l-8 8Z" fill="#9db7d6" />
              <path d="M3 12h22v8H3ZM33 4v8l-8 8v-8Z" fill="#c5d2e6" />
            </Icon>
          </Combo>
          <ArrowButton name="Pick unprocessed part" />
        </Field>
        <Field />
        <Field
          label="Material designation"
          id="material"
          icon={
            <>
              <Sheet />
              <span className="w-[14px] bg-[#1b4781] text-white font-['Liberation_Sans',sans-serif] font-bold text-[6px] leading-[7px] text-center">.abc</span>
            </>
          }
        >
          <TextBox id="material" value="" />
        </Field>

        {/* Dimension and offset are one group, marked by the bar at its left */}
        <div className="row-span-2 min-w-0 min-h-0 overflow-hidden grid grid-rows-2 border-l-2 border-l-[#123a6b] bg-gradient-to-r from-[#fbfcfd] to-[#deeaf2] -ml-px">
          <Field
            label="unprocessed part dimension"
            id="raw-x"
            className="bg-none pl-[2px]"
            icon={
              <span className="flex items-center">
                <PartBox front="#9db7d6" />
                <Letter>XY</Letter>
                <Radio name="Dimension" />
              </span>
            }
          >
            <TextBox id="raw-x" value="450" disabled />
            <TextBox name="Unprocessed part dimension Y" value="400" disabled />
          </Field>
          <Field
            label="Offset"
            id="raw-offset"
            className="bg-none pl-[2px]"
            icon={
              <span className="flex items-center">
                <PartBox side="#f7d0ad">
                  <path d="M46 34 60 20V4" stroke={ORANGE} />
                </PartBox>
                <Letter>XY</Letter>
                <Radio name="Offset" checked />
              </span>
            }
          >
            <TextBox id="raw-offset" value="0" />
            <TextBox name="Offset Y" value="0" />
          </Field>
        </div>
        <Field
          label="unprocessed part offset XY"
          id="raw-offset-xy"
          icon={
            <span className="flex items-center">
              <OffsetIcon dashed />
              <Letter>XY</Letter>
              <Tick name="Unprocessed part offset active" />
            </span>
          }
        >
          <TextBox id="raw-offset-xy" value="0" disabled />
          <TextBox name="Unprocessed part offset Y" value="0" disabled />
        </Field>
        <Field
          label="Grain direction"
          id="grain"
          icon={
            <span className="flex items-center">
              <Icon w={35} h={13} sw={3}>
                <path d="M3 16 12 3h38l-9 13ZM28 26l9-13h38l-9 13ZM54 37l9-14h38l-9 14Z" fill="#c5d2e6" />
                <path d="M16 10h20M40 20h22M66 30h22" stroke="#41699c" />
              </Icon>
              <Tick name="Grain direction active" />
            </span>
          }
        >
          <TextBox id="grain" value="0" disabled />
        </Field>

        <Field
          label="unprocessed part offset Z"
          id="raw-offset-z"
          faded
          icon={
            <>
              <OffsetIcon />
              <span className="w-1" />
              <Letter>Z</Letter>
            </>
          }
        >
          <TextBox id="raw-offset-z" value="0" disabled />
        </Field>
        <Field />

        <Field
          label="Convert unprocessed part areas into 3D models"
          faded
          icon={
            <Icon w={34} h={13} sw={3} color="#8e9499">
              <path d="m3 20 14-10 14 10-14 8ZM60 20l16-12 20 10-16 12ZM34 20h24" fill="#b5babe" />
            </Icon>
          }
        >
          <span className="flex-1" />
          <ArrowButton name="Convert" />
        </Field>
        <Field />
        <Field />
      </div>
    </div>
  );
}

const menus = ["File", "Edit", "View", "Contours", "Levels", "CAD-Plugin", "Macros", "Generate", "Extras", "Window", "Help"];

function TitleBar() {
  return (
    <div className="h-[19px] shrink-0 flex items-center bg-white pl-[4px]">
      <Icon w={12} h={12} sw={3}>
        <path d="M2 2h32v32H2Z" fill="#e3e6f3" stroke="#8d93b8" />
        <path d="M8 14v12h8M20 4 14 28l10-4 4-18" stroke="#2e3f86" />
      </Icon>
      <span className="pl-[3px] text-[8px] leading-[12px]">New*- woodWOP 7.2</span>
      <div className="ml-auto flex">
        <button aria-label="Minimize" className="w-[30px] flex items-center justify-center">
          <Minus size={9} strokeWidth={3} />
        </button>
        <button aria-label="Maximize" className="w-[30px] flex items-center justify-center">
          <Square size={9} strokeWidth={3} />
        </button>
        <button aria-label="Close" className="w-[30px] flex items-center justify-center">
          <X size={11} strokeWidth={2} />
        </button>
      </div>
    </div>
  );
}

function StatusBar() {
  return (
    <div className="h-[22px] shrink-0 flex items-center border-t border-[#c8d4de] bg-[#f6f9fd] pl-[3px] text-[7px] text-[#222]">
      <span className="font-['Noto_Sans',sans-serif]">X=-68.861949 Y=229.714685</span>
      <span className="ml-auto h-[16px] flex items-center border-x border-[#c8d4de] px-[2px] text-[8px] whitespace-nowrap text-black">
        M1: HOMAG BXX PC87 POWERTOUCH
      </span>
      <span className="w-[30px] h-full flex items-center justify-center">
        <Icon w={12} h={12} sw={3} color="#1f2328">
          <circle cx="18" cy="18" r="14" fill="#6a6f75" />
          <path d="M18 4v28M4 18h28M18 4q-14 14 0 28M18 4q14 14 0 28" />
        </Icon>
      </span>
      <span className="w-[12px] h-full flex items-end">
        <Icon w={9} h={9} sw={3} color="#9aa5af">
          <path d="M20 4h3M20 12h3M12 12h3M20 20h3M12 20h3M4 20h3" />
        </Icon>
      </span>
    </div>
  );
}

function DesktopStrip() {
  return (
    <div className="h-[13px] shrink-0 flex items-end overflow-hidden pl-[13px]">
      <span className="w-[16px] h-[6px] bg-[#e3cf8d]" />
      <span className="w-[32px] h-[9px] ml-[29px] bg-[#bcd6ee] flex justify-center overflow-hidden">
        <Icon w={20} h={9} sw={10} color="#24506f">
          <path d="M12 8h12q20 4 20 24" />
        </Icon>
      </span>
      <span className="w-[18px] h-[6px] ml-[25px] bg-[#e3cf8d]" />
      <span className="w-[26px] h-[9px] ml-[30px] flex overflow-hidden">
        <Icon w={26} h={9} sw={14} color="#e0262e">
          <ellipse cx="39" cy="44" rx="30" ry="36" />
        </Icon>
      </span>
      <span className="w-[30px] h-[9px] ml-[73px] bg-[#4b4040]" />
    </div>
  );
}

function TaskItem({ children, className }: { children: ReactNode; className?: string }) {
  return <button className={clsx("w-[33px] h-[24px] shrink-0 flex items-center justify-center", className)}>{children}</button>;
}

function Taskbar() {
  return (
    <div className="h-[11px] shrink-0 flex items-center overflow-hidden bg-gradient-to-r from-[#1c3340] to-[#10233f] text-[#dfe6ec]">
      <button aria-label="Start" className="w-[30px] flex items-center justify-center">
        <Icon w={12} h={12} color="none">
          <path d="M0 0h17v17H0ZM19 0h17v17H19ZM0 19h17v17H0ZM19 19h17v17H19Z" fill="#eef3f6" />
        </Icon>
      </button>
      <label className="w-[230px] h-full shrink-0 flex items-center gap-[8px] pl-[8px] bg-[#cfd4d6] text-[#3a3f44]">
        <Search size={10} className="-scale-x-100" />
        <input
          placeholder="Type here to search"
          aria-label="Search"
          className="flex-1 min-w-0 bg-transparent text-[9px] leading-[11px] placeholder:text-[#3a3f44]"
        />
      </label>
      <TaskItem>
        <Icon w={12} h={12} color="#dfe6ec" sw={5}>
          <circle cx="18" cy="18" r="13" />
        </Icon>
      </TaskItem>
      <TaskItem>
        <Icon w={12} h={12} color="#dfe6ec" sw={3}>
          <path d="M3 2v6h20V2M3 14h20v12H3ZM3 36v-6h20v6M31 2v32" />
        </Icon>
      </TaskItem>
      <TaskItem>
        <Icon w={16} h={16} sw={9} color="#2a9fd8">
          <path d="M42 26q0-18-18-18T6 26q2 14 18 14" />
          <path d="M24 8q18 0 18 14-6 8-16 2" stroke="#4fc480" />
        </Icon>
      </TaskItem>
      <TaskItem>
        <Icon w={14} h={14} sw={2} color="none">
          <path d="M2 4h16l4 4h18v30H2Z" fill="#f2ce6b" />
          <path d="M12 24h20v14H12Z" fill="#4a93cf" />
        </Icon>
      </TaskItem>
      <TaskItem>
        <Icon w={16} h={14} sw={2} color="none">
          <path d="M0 2h48v36H0Z" fill="#2a8bd8" />
          <path d="m0 2 24 20L48 2Z" fill="#e8f3fb" />
        </Icon>
      </TaskItem>
      <TaskItem>
        <Icon w={15} h={16} sw={10} color="#d8323a">
          <ellipse cx="22" cy="24" rx="15" ry="17" />
        </Icon>
      </TaskItem>
      <TaskItem>
        <span className="w-[10px] h-full bg-[#d9dde0]" />
      </TaskItem>
      <TaskItem>
        <Icon w={15} h={15} sw={10} color="#d9473c">
          <circle cx="22" cy="22" r="15" />
          <path d="M9 14q-8 18 12 23" stroke="#3fa257" />
          <path d="M24 37q16-4 12-22" stroke="#efc33a" />
          <circle cx="22" cy="22" r="7" fill="#4285d8" stroke="#fff" strokeWidth={3} />
        </Icon>
      </TaskItem>
      <TaskItem>
        <Icon w={16} h={15} sw={7} color="#58bdeb">
          <path d="M40 32q-8 8-18 6-14-4-12-18T26 8q14 2 14 16H12" />
          <path d="M4 34Q8 10 44 4" stroke="#efc33a" strokeWidth={3} />
        </Icon>
      </TaskItem>
      <TaskItem className="bg-[#4b5a66]">
        <Icon w={14} h={14} sw={4} color="#2e3f86">
          <path d="M2 2h38v38H2Z" fill="#e3e6f3" stroke="none" />
          <path d="M8 14v14h10M24 4 16 34l12-6 4-20" />
        </Icon>
      </TaskItem>
      <div className="ml-auto flex items-center gap-[6px] pr-[14px] shrink-0 text-[7px] leading-[11px] text-center">
        <ChevronUp size={11} />
        <Icon w={10} h={11} sw={3} color="#dfe6ec">
          <path d="M4 6h14v20H4ZM18 12l8-4v14l-8-4M6 32h10" />
        </Icon>
        <Icon w={11} h={11} sw={3} color="#dfe6ec">
          <circle cx="16" cy="16" r="13" />
          <path d="M16 3v26M3 16h26M16 3Q4 16 16 29M16 3q12 13 0 26" />
        </Icon>
        <Icon w={12} h={11} sw={3} color="#dfe6ec">
          <path d="M3 12h6l8-8v24l-8-8H3ZM22 10q4 6 0 12M28 6q8 10 0 20" />
        </Icon>
        <span>
          ENG
          <br />
          US
        </span>
        <span className="pr-[6px]">
          5:57 PM
          <br />
          8/21/2022
        </span>
        <Icon w={12} h={12} sw={3} color="#dfe6ec">
          <path d="M3 3h30v22H20l-6 8v-8H3Z" fill="#dfe6ec" />
          <path d="M9 10h18M9 17h18" stroke="#26384a" />
        </Icon>
      </div>
    </div>
  );
}

export default function App() {
  return (
    <div className="relative h-screen flex flex-col overflow-hidden bg-gradient-to-r from-[#0090f0] via-[#0a62c8] to-[#0a3aa8] font-['Noto_Sans','Liberation_Sans',sans-serif] text-[#1d1d1d]">
      <DesktopStrip />
      <div className="flex-1 min-h-0 ml-1 mr-[5px] flex flex-col bg-[#f5f9fd]">
        <TitleBar />
        <nav className="h-[17px] shrink-0 flex items-center gap-[6px] pl-[4px] bg-[#fafcfe] text-[8px] leading-[12px]">
          {menus.map((menu) => (
            <button key={menu}>{menu}</button>
          ))}
        </nav>
        <MainToolbar />

        <div className="flex-1 min-h-0 flex">
          <ToolStrip tools={leftTools} />
          <div className="flex-1 min-w-0 flex flex-col border-x border-[#cfd9e3]">
            <div className="flex-[373_1_0%] min-h-0 flex">
              <VariablesPanel />
              <button aria-label="Collapse panel" className="w-[4px] shrink-0 bg-[#d0dcec] flex items-center">
                <span className="border-y-[3px] border-y-transparent border-r-[3px] border-r-[#10185e]" />
              </button>
              <div className="flex-1 min-w-0 flex flex-col border border-[#d6a077]">
                <ViewToolbar />
                <div className="flex-1 min-h-0 overflow-hidden">
                  <Scene />
                </div>
              </div>
              <div className="px-px">
                <ToolStrip tools={editTools} />
              </div>
            </div>
            <button aria-label="Collapse form" className="h-[5px] shrink-0 bg-[#d0dcec] flex justify-center pt-px">
              <span className="border-x-[3px] border-x-transparent border-t-[3px] border-t-[#10185e]" />
            </button>
            <div className="flex-[238_1_0%] min-h-0 flex">
              <HelpPanel />
              <div className="w-[4px] shrink-0 bg-[#d0dcec]" />
              <PartForm />
            </div>
          </div>
          <div className="pl-px">
            <ToolStrip tools={drawTools} />
          </div>
        </div>
        <StatusBar />
      </div>
      <Taskbar />

      {/* Watermarks that lie over the whole desktop */}
      <div className="absolute right-[54px] bottom-[53px] w-[159px] pointer-events-none text-[#a9b2b9] whitespace-nowrap">
        <p className="text-[13px] leading-[18px]">Activate Windows</p>
        <p className="text-[9px] leading-[12px]">Go to Settings to activate Windows.</p>
      </div>
      <div className="absolute right-0 bottom-[17px] w-[274px] h-[53px] flex items-center justify-center bg-[#4a4a4a]/55 pointer-events-none">
        <span className="font-['Open_Sans',sans-serif] font-light text-[38px] leading-none text-white">PowerDirector</span>
      </div>
    </div>
  );
}
